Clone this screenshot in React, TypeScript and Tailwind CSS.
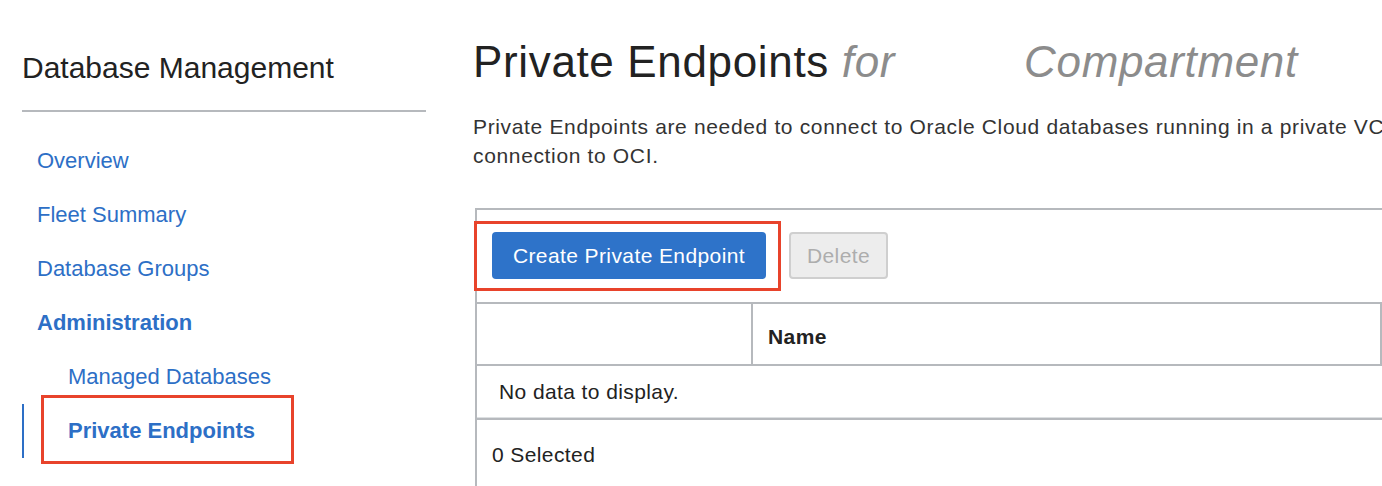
export default function App() {
  const navItems = [
    { label: "Overview", indent: false, bold: false },
    { label: "Fleet Summary", indent: false, bold: false },
    { label: "Database Groups", indent: false, bold: false },
    { label: "Administration", indent: false, bold: true },
    { label: "Managed Databases", indent: true, bold: false },
  ];

  return (
    <div className="flex w-[1382px] h-[486px] overflow-hidden bg-white font-['Liberation_Sans',Arial,sans-serif]">
      {/* Sidebar */}
      <aside className="w-[426px] shrink-0 pl-[22px]">
        <h2 className="pt-[53px] text-[30px] leading-none text-[#222]">Database Management</h2>
        <div className="mt-[27px] h-[2px] bg-[#b6b9bd]" />
        <nav className="mt-[22px] flex flex-col">
          {navItems.map((item) => (
            <a
              key={item.label}
              href="#"
              className={`h-[54px] leading-[54px] text-[22px] text-[#2d6fc6] ${
                item.indent ? "pl-[46px]" : "pl-[15px]"
              } ${item.bold ? "font-bold" : ""}`}
            >
              {item.label}
            </a>
          ))}
          <div className="relative h-[54px] border-l-2 border-[#2d6fc6]">
            <a href="#" className="block pl-[44px] leading-[54px] text-[22px] font-bold text-[#2d6fc6]">
              Private Endpoints
            </a>
            {/* annotation */}
            <div className="absolute left-[17px] top-[-9px] w-[253px] h-[69px] border-[3px] border-[#e8432b]" />
          </div>
        </nav>
      </aside>

      {/* Main */}
      <main className="w-[1000px] shrink-0 pl-[47px]">
        <h1 className="pt-[40px] text-[44px] leading-none tracking-[0.65px] text-[#222] whitespace-nowrap">
          Private Endpoints <span className="italic text-[#8c8c8c]">for</span>
          <span className="italic text-[#8c8c8c] ml-[129px]">Compartment</span>
        </h1>
        <p className="mt-[28px] text-[21px] leading-[29px] tracking-[0.65px] text-[#333] whitespace-nowrap">
          Private Endpoints are needed to connect to Oracle Cloud databases running in a private VCN or through a private
          <br />
          connection to OCI.
        </p>

        {/* Table */}
        <div className="ml-[2px] mt-[38px] border-t-2 border-l-2 border-[#b6b9bd] text-[21px] tracking-[0.4px] text-[#222]">
          <div className="relative flex items-center pl-[15px] pt-[22px] pb-[23px]">
            <button className="w-[274px] h-[47px] rounded-[4px] bg-[#2e73c9] text-white">
              Create Private Endpoint
            </button>
            <button className="ml-[23px] w-[99px] h-[47px] rounded-[4px] border-2 border-[#cfcfcf] bg-[#ededed] text-[#adadad]">
              Delete
            </button>
            <div className="absolute left-[-3px] top-[11px] w-[307px] h-[70px] border-[3px] border-[#e8432b]" />
          </div>
          <div className="flex w-[905px] h-[64px] border-y-2 border-r-2 border-[#b6b9bd]">
            <div className="w-[274px]" />
            <div className="flex-1 flex items-center border-l-2 border-[#b6b9bd] pl-[15px] pt-[6px] font-bold">Name</div>
          </div>
          <div className="flex items-center h-[52px] pl-[22px] border-b border-[#dde0e2]">No data to display.</div>
          <div className="flex items-center h-[72px] pl-[15px] border-t-2 border-[#b6b9bd]">0 Selected</div>
        </div>
      </main>
    </div>
  );
}
